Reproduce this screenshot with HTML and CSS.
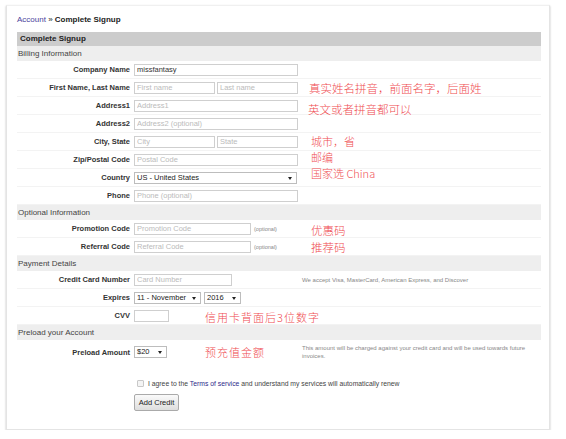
FILE: index.html
```html
<!DOCTYPE html>
<html lang="en">
<head>
    <meta charset="UTF-8">
    <title>Complete Signup</title>
    <link rel="stylesheet" href="styles.css">
</head>
<body>
    <div class="panel">
        <div class="crumb"><a href="#">Account</a> &raquo; <b>Complete Signup</b></div>

        <div class="form">
            <div class="head">Complete Signup</div>

            <div class="section">Billing Information</div>
            <div class="row">
                <label>Company Name</label>
                <div class="field"><input class="w-full" value="missfantasy"></div>
            </div>
            <div class="row">
                <label>First Name, Last Name</label>
                <div class="field"><input class="w-half" placeholder="First name"><input class="w-half" placeholder="Last name"></div>
            </div>
            <div class="row">
                <label>Address1</label>
                <div class="field"><input class="w-full" placeholder="Address1"></div>
            </div>
            <div class="row">
                <label>Address2</label>
                <div class="field"><input class="w-full" placeholder="Address2 (optional)"></div>
            </div>
            <div class="row">
                <label>City, State</label>
                <div class="field"><input class="w-half" placeholder="City"><input class="w-half" placeholder="State"></div>
            </div>
            <div class="row">
                <label>Zip/Postal Code</label>
                <div class="field"><input class="w-full" placeholder="Postal Code"></div>
            </div>
            <div class="row">
                <label>Country</label>
                <div class="field"><span class="select w-country">US - United States</span></div>
            </div>
            <div class="row">
                <label>Phone</label>
                <div class="field"><input class="w-full" placeholder="Phone (optional)"></div>
            </div>

            <div class="section">Optional Information</div>
            <div class="row">
                <label>Promotion Code</label>
                <div class="field"><input class="w-code" placeholder="Promotion Code"><span class="opt">(optional)</span></div>
            </div>
            <div class="row">
                <label>Referral Code</label>
                <div class="field"><input class="w-code" placeholder="Referral Code"><span class="opt">(optional)</span></div>
            </div>

            <div class="section">Payment Details</div>
            <div class="row">
                <label>Credit Card Number</label>
                <div class="field"><input class="w-card" placeholder="Card Number"></div>
                <div class="note">We accept Visa, MasterCard, American Express, and Discover</div>
            </div>
            <div class="row">
                <label>Expires</label>
                <div class="field"><span class="select w-month">11 - November</span><span class="select w-year">2016</span></div>
            </div>
            <div class="row">
                <label>CVV</label>
                <div class="field"><input class="w-cvv"></div>
            </div>

            <div class="section">Preload your Account</div>
            <div class="row tall">
                <label>Preload Amount</label>
                <div class="field"><span class="select w-amount">$20</span></div>
                <div class="note">This amount will be charged against your credit card and will be used towards future invoices.</div>
            </div>
        </div>

        <div class="agree">
            <div class="check"><span class="box"></span><span>I agree to the <a href="#">Terms of service</a> and understand my services will automatically renew</span></div>
            <button class="btn">Add Credit</button>
        </div>

        <!-- red notes written over the screenshot -->
        <div class="memo" style="left: 302px; top: 76px;">真实姓名拼音，前面名字，后面姓</div>
        <div class="memo" style="left: 301px; top: 97px;">英文或者拼音都可以</div>
        <div class="memo small" style="left: 304px; top: 129px;">城市，省</div>
        <div class="memo small" style="left: 304px; top: 145px;">邮编</div>
        <div class="memo small" style="left: 304px; top: 161px;">国家选 China</div>
        <div class="memo" style="left: 304px; top: 218px;">优惠码</div>
        <div class="memo" style="left: 304px; top: 235px;">推荐码</div>
        <div class="memo wide" style="left: 198px; top: 305px;">信用卡背面后3位数字</div>
        <div class="memo wide" style="left: 198px; top: 340px;">预充值金额</div>
    </div>
</body>
</html>
```

FILE: styles.css
```css
body, html {
    margin: 0;
    padding: 0;
    background: #fff;
    font-family: "Liberation Sans", Arial, sans-serif;
    color: #333;
}

.panel {
    position: relative;
    width: 544px;
    margin: 5px 0 0 6px;
    padding: 0 8px 18px 10px;
    box-sizing: border-box;
    border: 1px solid #e4e4e4;
    border-top-color: #f0f0f0;
    box-shadow: 0 1px 2px rgba(0, 0, 0, 0.25);
}

.crumb {
    height: 26px;
    line-height: 28px;
    font-size: 8px;
    color: #222;
}

.crumb a {
    color: #4a3f9c;
    text-decoration: none;
}

.head {
    height: 14px;
    line-height: 14px;
    padding-left: 3px;
    background: #cccccc;
    font-size: 8px;
    font-weight: bold;
    color: #222;
}

.section {
    height: 15px;
    line-height: 15px;
    padding-left: 1px;
    background: #eeeeee;
    font-size: 8px;
    color: #444;
}

.row {
    display: grid;
    grid-template-columns: 117px 168px 1fr;
    align-items: center;
    height: 18px;
    box-sizing: border-box;
    border-bottom: 1px solid #f3f3f3;
}

.row.tall {
    height: 24px;
    border-bottom: none;
}

.row label {
    padding-right: 4px;
    text-align: right;
    font-size: 7.5px;
    font-weight: bold;
    color: #333;
}

.field {
    display: flex;
    align-items: center;
    gap: 2px;
}

input {
    height: 12px;
    box-sizing: border-box;
    margin: 0;
    padding: 0 2px;
    border: 1px solid #cfcfcf;
    font-family: inherit;
    font-size: 7.5px;
    color: #333;
    outline: none;
}

input::placeholder {
    color: #bbb;
}

.w-full { width: 164px; }
.w-half { width: 81px; }
.w-code { width: 117px; }
.w-card { width: 98px; }
.w-cvv { width: 35px; }

.select {
    position: relative;
    display: inline-block;
    height: 12px;
    line-height: 10px;
    box-sizing: border-box;
    padding-left: 2px;
    border: 1px solid #bdbdbd;
    font-size: 7.5px;
    color: #222;
    background: #fff;
}

.select::after {
    content: "";
    position: absolute;
    right: 4px;
    top: 4px;
    border-left: 2px solid transparent;
    border-right: 2px solid transparent;
    border-top: 3px solid #222;
}

.w-country { width: 163px; }
.w-month { width: 67px; margin-right: 1px; }
.w-year { width: 37px; }
.w-amount { width: 33px; }

.opt {
    margin-left: 1px;
    font-size: 5.5px;
    color: #888;
}

.note {
    font-size: 6px;
    line-height: 8px;
    color: #888;
    padding-right: 8px;
}

.agree {
    padding: 14px 0 0 120px;
}

.check {
    display: flex;
    align-items: center;
    height: 10px;
    font-size: 6.8px;
    color: #444;
    white-space: nowrap;
}

.check a {
    color: #2d2a8a;
    text-decoration: none;
}

.box {
    flex: none;
    width: 5px;
    height: 5px;
    margin-right: 4px;
    border: 1px solid #c8c8c8;
    border-radius: 1px;
    background: #f4f4f4;
}

.btn {
    display: block;
    width: 45px;
    height: 17px;
    margin-top: 6px;
    margin-left: -3px;
    padding: 0;
    border: 1px solid #aaa;
    border-radius: 2px;
    background: linear-gradient(#fafafa, #dedede);
    font-family: inherit;
    font-size: 7.5px;
    color: #222;
}

.memo {
    position: absolute;
    line-height: 12px;
    white-space: nowrap;
    font-family: "Noto Sans CJK SC", sans-serif;
    font-size: 11.5px;
    font-weight: 300;
    color: #ef4b50;
}

.memo.small {
    font-size: 11px;
}

.memo.wide {
    font-size: 11px;
    letter-spacing: 1px;
}
```
